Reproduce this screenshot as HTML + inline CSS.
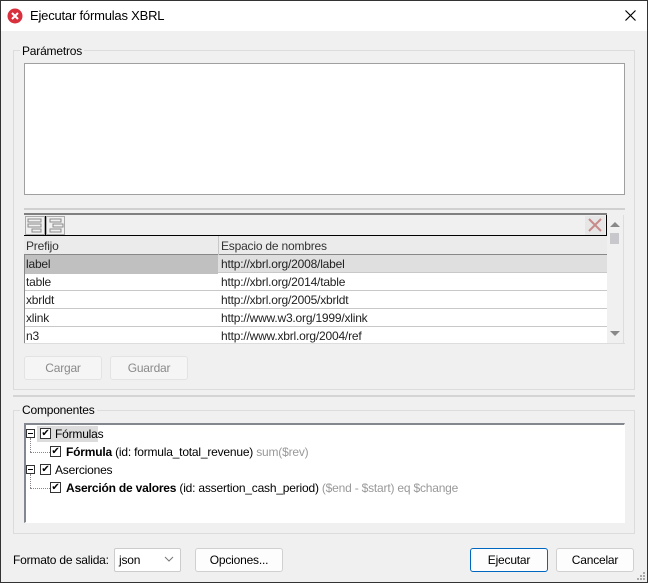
<!DOCTYPE html>
<html><head><meta charset="utf-8"><style>
*{box-sizing:border-box;margin:0;padding:0}
body{width:648px;height:583px;overflow:hidden;background:#f0f0f0;font-family:"Liberation Sans",sans-serif;font-size:12px;letter-spacing:-0.2px;color:#000;position:relative}
.a{position:absolute}
.win{left:0;top:0;width:648px;height:583px;border:1px solid #333}
.title{left:1px;top:1px;width:646px;height:30px;background:#fff}
.grp{border:1px solid #dcdcdc}
.lbl{background:#f0f0f0;padding:0 2px;line-height:14px}
.white{background:#fff;border:1px solid #a0a0a0}
.btn{background:#fdfdfd;border:1px solid #d0d0d0;border-radius:3px;text-align:center;line-height:20px}
.dis{color:#8a8a8a;background:#f5f5f5;border-color:#e3e3e3}
.row{height:18px;line-height:19px;border-bottom:1px solid #c8c8c8;font-size:12px;color:#222}
.cb{width:11px;height:11px;border:1px solid #333;background:#fff;font-size:10px;line-height:9px;text-align:center}
.pm{width:9px;height:9px;border:1px solid #333;background:#fff}
.pm:after{content:"";position:absolute;left:1px;top:3px;width:5px;height:1px;background:#000}
.dot{border-top:1px dotted #888}
.dotv{border-left:1px dotted #888}
</style></head><body>
<div class="a win"></div>
<div class="a title"></div>
<svg class="a" style="left:7px;top:8px" width="16" height="16" viewBox="0 0 16 16"><circle cx="8" cy="8" r="7.5" fill="#d9303e"/><path d="M5 5l6 6M11 5l-6 6" stroke="#fff" stroke-width="2"/></svg>
<div class="a" style="left:30px;top:8px;font-size:13px">Ejecutar fórmulas XBRL</div>
<svg class="a" style="left:625px;top:10px" width="11" height="11"><path d="M0.5 0.5L10.5 10.5M10.5 0.5L0.5 10.5" stroke="#000" stroke-width="1.2"/></svg>

<div class="a grp" style="left:13px;top:50px;width:622px;height:340px"></div>
<div class="a lbl" style="left:20px;top:44px">Parámetros</div>
<div class="a white" style="left:24px;top:63px;width:601px;height:132px"></div>
<div class="a" style="left:24px;top:208px;width:601px;height:2px;background:#d0d0d0"></div>
<div class="a" style="left:24px;top:213px;width:583px;height:2px;background:#808080"></div>
<div class="a" style="left:24px;top:215px;width:583px;height:21px;background:#f0f0f0;border-bottom:1px solid #000;border-right:1px solid #000"></div>
<svg class="a" style="left:25px;top:216px" width="40" height="19"><rect x="0.5" y="0.5" width="19" height="18" fill="#f0f0f0" stroke="#aaa"/><rect x="20" y="0" width="1" height="19" fill="#000"/><path d="M3 3h13v3H3zM3 8h13v3H3zM7 13h9v3H7z" fill="none" stroke="#8a8a8a"/><rect x="21.5" y="0.5" width="18" height="18" fill="#f0f0f0" stroke="#aaa"/><rect x="40" y="0" width="1" height="19" fill="#000"/><path d="M25 3h11v3H25zM28 8h10v3H28zM25 13h11v3H25z" fill="none" stroke="#8a8a8a"/></svg>
<svg class="a" style="left:585px;top:216px" width="20" height="19"><rect width="20" height="19" fill="#e6e6e6"/><path d="M4 3L16 15M16 3L4 15" stroke="#c98a8a" stroke-width="2"/></svg>
<div class="a" style="left:24px;top:236px;width:583px;height:19px;background:#ebebeb;border-bottom:1px solid #888"></div>
<div class="a" style="left:218px;top:236px;width:1px;height:108px;background:#c8c8c8"></div>
<div class="a" style="left:26px;top:239px;color:#333">Prefijo</div>
<div class="a" style="left:221px;top:239px;color:#333">Espacio de nombres</div>
<div class="a" style="left:24px;top:255px;width:1px;height:89px;background:#888"></div>
<div class="a" style="left:25px;top:255px;width:582px">
<div class="row" style="background:#dfdfdf"><span style="display:inline-block;width:193px;background:#c0c0c0;padding-left:1px">label</span><span style="padding-left:3px">http://xbrl.org/2008/label</span></div>
<div class="row" style="background:#fff"><span style="display:inline-block;width:193px;padding-left:1px">table</span><span style="padding-left:3px">http://xbrl.org/2014/table</span></div>
<div class="row" style="background:#fff"><span style="display:inline-block;width:193px;padding-left:1px">xbrldt</span><span style="padding-left:3px">http://xbrl.org/2005/xbrldt</span></div>
<div class="row" style="background:#fff"><span style="display:inline-block;width:193px;padding-left:1px">xlink</span><span style="padding-left:3px">http://www.w3.org/1999/xlink</span></div>
<div class="row" style="background:#fff;border-bottom:none;height:16px"><span style="display:inline-block;width:193px;padding-left:1px">n3</span><span style="padding-left:3px">http://www.xbrl.org/2004/ref</span></div>
</div>
<div class="a" style="left:607px;top:215px;width:17px;height:128px;background:#f0f0f0;border-right:1px solid #ddd"></div>
<svg class="a" style="left:609px;top:220px" width="12" height="120"><path d="M1 7L6 2L11 7z" fill="#888"/><rect x="1" y="13" width="9" height="11" fill="#c8c8cc"/><path d="M1 111L6 116L11 111z" fill="#888"/></svg>
<div class="a" style="left:24px;top:343px;width:601px;height:1px;background:#ddd"></div>
<div class="a btn dis" style="left:24px;top:356px;width:78px;height:24px;line-height:22px">Cargar</div>
<div class="a btn dis" style="left:110px;top:356px;width:78px;height:24px;line-height:22px">Guardar</div>

<div class="a" style="left:13px;top:395px;width:622px;height:2px;background:#d4d4d4"></div>
<div class="a grp" style="left:13px;top:410px;width:622px;height:124px"></div>
<div class="a lbl" style="left:20px;top:403px">Componentes</div>
<div class="a white" style="left:24px;top:423px;width:601px;height:100px;border-color:#828790 #fff #fff #828790;border-width:2px 1px 1px 2px"></div>
<div class="a" style="left:37px;top:426px;width:61px;height:16px;background:#dcdcdc"></div>
<div class="a pm" style="left:26px;top:429px"></div>
<div class="a cb" style="left:40px;top:428px">✔</div>
<div class="a" style="left:55px;top:427px">Fórmulas</div>
<div class="a dotv" style="left:30px;top:438px;height:14px"></div>
<div class="a dot" style="left:30px;top:452px;width:20px"></div>
<div class="a cb" style="left:50px;top:446px">✔</div>
<div class="a" style="left:66px;top:445px"><b>Fórmula</b> (id: formula_total_revenue) <span style="color:#999">sum($rev)</span></div>
<div class="a pm" style="left:26px;top:465px"></div>
<div class="a cb" style="left:40px;top:464px">✔</div>
<div class="a" style="left:55px;top:463px">Aserciones</div>
<div class="a dotv" style="left:30px;top:474px;height:14px"></div>
<div class="a dot" style="left:30px;top:488px;width:20px"></div>
<div class="a cb" style="left:50px;top:482px">✔</div>
<div class="a" style="left:66px;top:481px"><b>Aserción de valores</b> (id: assertion_cash_period) <span style="color:#999">($end - $start) eq $change</span></div>

<div class="a" style="left:13px;top:553px">Formato de salida:</div>
<div class="a" style="left:114px;top:548px;width:67px;height:24px;background:#fff;border:1px solid #ccc;border-radius:2px;padding-left:4px;line-height:22px">json</div>
<svg class="a" style="left:164px;top:556px" width="10" height="6"><path d="M1 1L5 5L9 1" fill="none" stroke="#777"/></svg>
<div class="a btn" style="left:195px;top:548px;width:88px;height:24px;line-height:22px">Opciones...</div>
<div class="a btn" style="left:470px;top:548px;width:78px;height:24px;line-height:22px;border:1px solid #0067c0;border-radius:3px">Ejecutar</div>
<div class="a btn" style="left:556px;top:548px;width:78px;height:24px;line-height:22px">Cancelar</div>
<svg class="a" style="left:636px;top:571px" width="10" height="10"><g fill="#aaa"><rect x="7" y="1" width="2" height="2"/><rect x="4" y="4" width="2" height="2"/><rect x="7" y="4" width="2" height="2"/><rect x="1" y="7" width="2" height="2"/><rect x="4" y="7" width="2" height="2"/><rect x="7" y="7" width="2" height="2"/></g></svg>
</body></html>
